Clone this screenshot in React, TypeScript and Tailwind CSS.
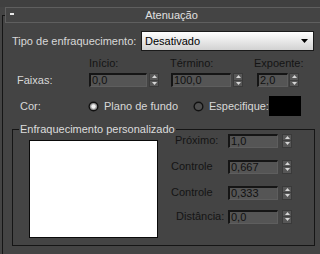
import React from 'react';

function Spinner() {
  return (
    <div className="flex flex-col w-[10px] h-[14px] bg-[#575757] border border-[#3a3a3a]">
      <div className="flex-1 flex items-center justify-center border-b border-[#3f3f3f]">
        <svg width="5" height="3" viewBox="0 0 5 3"><path d="M2.5 0 L5 3 L0 3 Z" fill="#d6d6d6" /></svg>
      </div>
      <div className="flex-1 flex items-center justify-center">
        <svg width="5" height="3" viewBox="0 0 5 3"><path d="M0 0 L5 0 L2.5 3 Z" fill="#d6d6d6" /></svg>
      </div>
    </div>
  );
}

function Field({ value, w }: { value: string; w: string }) {
  return (
    <div className={`${w} h-[14px] bg-[#555555] border-t-2 border-l-2 border-t-[#151515] border-l-[#151515] border-r border-b border-r-[#5e5e5e] border-b-[#5e5e5e] text-[#111111] leading-[11px] pl-[1px]`}>
      {value}
    </div>
  );
}

function Radio({ on }: { on?: boolean }) {
  return (
    <svg width="11" height="11" viewBox="0 0 11 11">
      <circle cx="5.5" cy="5.5" r="5" fill="#111" />
      <circle cx="5.5" cy="5.5" r="3.6" fill={on ? '#9a9a9a' : '#4e4e4e'} />
      {on && <circle cx="5.5" cy="5.5" r="2.2" fill="#f2f2f2" />}
    </svg>
  );
}

const sideRows = [
  { label: 'Próximo:', pad: 'pl-[4px]', value: '1,0', mt: 'mt-[3px]' },
  { label: 'Controle', pad: 'pl-0', value: '0,667', mt: 'mt-[11px]' },
  { label: 'Controle', pad: 'pl-0', value: '0,333', mt: 'mt-[11px]' },
  { label: 'Distância:', pad: 'pl-[5px]', value: '0,0', mt: 'mt-[9px]' },
];

export default function App() {
  return (
    <div className="w-[320px] h-[254px] bg-[#444444] overflow-hidden font-['Liberation_Sans',Arial,sans-serif] text-[11px] text-[#d8d8d8] leading-[13px]">
      <div className="h-[7px] bg-[#404040]" />
      {/* rollout frame */}
      <div className="mt-[8px] ml-[2px] h-[239px] border-l border-t border-[#151515]">
        {/* header */}
        <div className="relative -mt-[9px] ml-[2px] -mr-[8px] h-[16px] border border-[#5f5f5f] bg-[#444444] flex items-center">
          <span className="absolute left-[4px] top-[5px] w-[4px] h-[2px] bg-[#e8e8e8]" />
          <span className="w-full text-center pl-[10px] text-[#e0e0e0]">Atenuação</span>
        </div>

        {/* Tipo de enfraquecimento */}
        <div className="mt-[8px] flex items-center h-[20px]">
          <span className="ml-[9px] w-[129px]">Tipo de enfraquecimento:</span>
          <div className="w-[173px] h-[20px] border border-[#1a1a1a] bg-gradient-to-b from-white to-[#d2d2d2] flex items-center pl-[3px] pr-[5px] text-black">
            <span className="flex-1">Desativado</span>
            <svg width="7" height="4" viewBox="0 0 7 4"><path d="M0 0 L7 0 L3.5 4 Z" fill="#000" /></svg>
          </div>
        </div>

        {/* Faixas */}
        <div className="mt-[6px] flex">
          <div className="ml-[14px] w-[72px] pt-[17px]">Faixas:</div>
          <div className="flex flex-col w-[81px]">
            <span className="text-[#141414]">Início:</span>
            <div className="mt-[3px] flex gap-[2px]">
              <Field value="0,0" w="w-[58px]" />
              <Spinner />
            </div>
          </div>
          <div className="flex flex-col w-[84px]">
            <span className="text-[#141414]">Término:</span>
            <div className="mt-[3px] flex gap-[2px] ml-[1px]">
              <Field value="100,0" w="w-[60px]" />
              <Spinner />
            </div>
          </div>
          <div className="flex flex-col">
            <span className="text-[#141414]">Expoente:</span>
            <div className="mt-[3px] flex gap-[1px] ml-[3px]">
              <Field value="2,0" w="w-[31px]" />
              <Spinner />
            </div>
          </div>
        </div>

        {/* Cor */}
        <div className="mt-[9px] flex items-center h-[20px]">
          <span className="ml-[17px] w-[68px]">Cor:</span>
          <Radio on />
          <span className="ml-[5px] w-[89px]">Plano de fundo</span>
          <Radio />
          <span className="ml-[5px] w-[60px]">Especifique:</span>
          <div className="w-[32px] h-[20px] bg-black" />
        </div>

        {/* group box */}
        <div className="relative mt-[13px] ml-[9px] w-[303px] h-[117px] border border-[#151515] flex">
          <span className="absolute -top-[7px] left-[6px] px-[1px] bg-[#444444] text-[#dcdcdc]">Enfraquecimento personalizado</span>
          <div className="mt-[10px] ml-[16px] w-[129px] h-[98px] bg-white border border-[#0a0a0a]" />
          <div className="ml-[13px] flex flex-col">
            {sideRows.map((r, i) => (
              <div key={i} className={`${r.mt} flex items-center h-[15px]`}>
                <span className={`${r.pad} w-[57px] text-[#141414]`}>{r.label}</span>
                <div className="flex gap-[4px]">
                  <Field value={r.value} w="w-[50px]" />
                  <Spinner />
                </div>
              </div>
            ))}
          </div>
        </div>
      </div>
    </div>
  );
}
